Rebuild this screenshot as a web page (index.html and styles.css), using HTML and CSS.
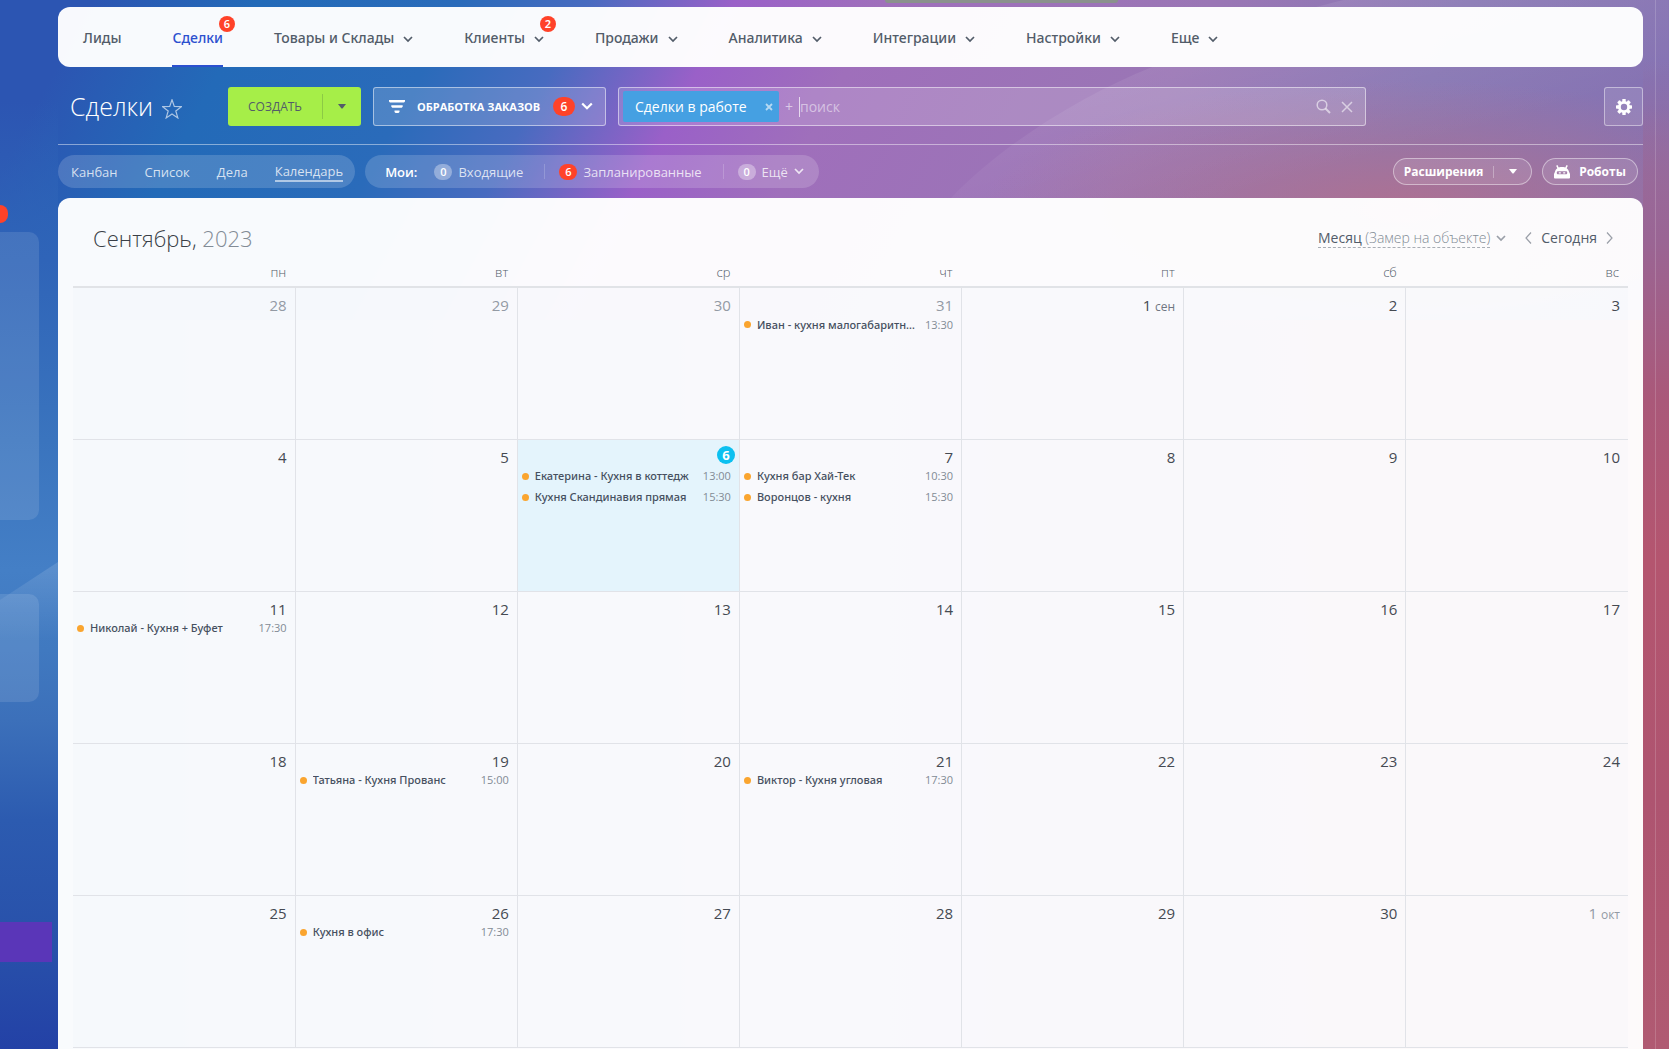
FILE: index.html
```html
<!DOCTYPE html>
<html lang="ru">
<head>
<meta charset="utf-8">
<meta name="viewport" content="width=device-width, initial-scale=1">
<title>Сделки</title>
<link rel="stylesheet" href="styles.css">
</head>
<body>
<svg class="defs" aria-hidden="true">
  <symbol id="chev" viewBox="0 0 10 7"><path d="M1 1l4 4 4-4" fill="none" stroke="currentColor" stroke-width="1.7"/></symbol>
  <symbol id="caret" viewBox="0 0 8 5"><path d="M0 0h8L4.500 4.500h-1z" fill="currentColor"/></symbol>
</svg>
<div class="wave-left" aria-hidden="true"></div>
<svg class="wave-right" aria-hidden="true" viewBox="0 0 713 198" preserveAspectRatio="none"><defs><linearGradient id="wg" x1="0" y1="0" x2="1" y2="1"><stop offset="0" stop-color="#fff" stop-opacity=".13"/><stop offset=".7" stop-color="#fff" stop-opacity="0"/></linearGradient></defs><path d="M0 198C50 145 130 95 200 67C270 35 340 12 390 0H713V198Z" fill="url(#wg)"/></svg>
<div class="layout">
  <aside class="side" aria-label="Боковое меню">
    <span class="side-badge"></span>
    <div class="side-card side-card-tall"></div>
    <div class="side-card side-card-short"></div>
    <div class="side-accent"></div>
  </aside>
  <main class="main">
    <nav class="nav" aria-label="Разделы CRM">
      <a href="#">Лиды</a>
      <a href="#" class="active">Сделки<span class="badge nav-badge">6</span></a>
      <a href="#">Товары и Склады<svg class="chev"><use href="#chev"/></svg></a>
      <a href="#">Клиенты<svg class="chev"><use href="#chev"/></svg><span class="badge nav-badge">2</span></a>
      <a href="#">Продажи<svg class="chev"><use href="#chev"/></svg></a>
      <a href="#">Аналитика<svg class="chev"><use href="#chev"/></svg></a>
      <a href="#">Интеграции<svg class="chev"><use href="#chev"/></svg></a>
      <a href="#">Настройки<svg class="chev"><use href="#chev"/></svg></a>
      <a href="#">Еще<svg class="chev"><use href="#chev"/></svg></a>
    </nav>

    <header class="toolbar">
      <h1>Сделки</h1>
      <button class="star" aria-label="В избранное"><svg viewBox="0 0 20 20"><path d="M10 .8l2.300 6.600 7.100.3-5.600 4.300 2 6.900L10 14.900l-5.800 4 2-6.900L.6 7.700l7.100-.3z" fill="none" stroke="currentColor" stroke-width="1.200"/></svg></button>
      <div class="create">
        <button class="create-main">СОЗДАТЬ</button>
        <button class="create-more" aria-label="Ещё варианты"><svg class="caret"><use href="#caret"/></svg></button>
      </div>
      <button class="funnel">
        <svg class="funnel-icon" viewBox="0 0 16 14"><path d="M0 0h16v1.500l-1 1H1l-1-1zM2.300 5.200h11.400v1.500l-1 1H3.300l-1-1zM5.500 10.500h5v1.500l-1 1h-3l-1-1z" fill="currentColor"/></svg>
        <span class="funnel-name">ОБРАБОТКА ЗАКАЗОВ</span>
        <span class="badge funnel-badge">6</span>
        <svg class="chev-bold" viewBox="0 0 12 9"><path d="M1.200 1.500L6 6.300l4.800-4.800" fill="none" stroke="currentColor" stroke-width="2.200"/></svg>
      </button>
      <div class="search">
        <span class="tag">Сделки в работе<button aria-label="Убрать фильтр"><svg viewBox="0 0 8 8"><path d="M1 1l6 6M7 1L1 7" stroke="currentColor" stroke-width="1.800"/></svg></button></span>
        <span class="plus">+</span>
        <input type="text" placeholder="поиск" aria-label="поиск">
        <button class="search-btn" aria-label="Найти"><svg viewBox="0 0 15 15"><circle cx="6" cy="6" r="4.800" fill="none" stroke="currentColor" stroke-width="1.500"/><path d="M9.500 9.500l4.500 4.500" stroke="currentColor" stroke-width="2"/></svg></button>
        <button class="clear-btn" aria-label="Очистить"><svg viewBox="0 0 12 12"><path d="M1 1l10 10M11 1L1 11" stroke="currentColor" stroke-width="1.500"/></svg></button>
      </div>
      <button class="gear" aria-label="Настройки"><svg viewBox="-8 -8 16 16"><g fill="currentColor"><rect x="-1.700" y="-8" width="3.400" height="16" rx=".6"/><rect x="-1.700" y="-8" width="3.400" height="16" rx=".6" transform="rotate(45)"/><rect x="-1.700" y="-8" width="3.400" height="16" rx=".6" transform="rotate(90)"/><rect x="-1.700" y="-8" width="3.400" height="16" rx=".6" transform="rotate(135)"/><circle r="6"/></g><circle r="3.200" fill="#9684bb"/></svg></button>
    </header>

    <div class="subbar">
      <nav class="pill views" aria-label="Вид">
        <a href="#">Канбан</a><a href="#">Список</a><a href="#">Дела</a><a href="#" class="current">Календарь</a>
      </nav>
      <div class="pill counters">
        <span class="mine">Мои:</span>
        <a href="#"><span class="count">0</span>Входящие</a>
        <a href="#"><span class="count hot">6</span>Запланированные</a>
        <a href="#"><span class="count">0</span>Ещё<svg class="chev"><use href="#chev"/></svg></a>
      </div>
      <div class="outline ext">
        <button class="ext-main">Расширения</button>
        <button class="ext-more" aria-label="Список расширений"><svg class="caret"><use href="#caret"/></svg></button>
      </div>
      <button class="outline robots"><svg viewBox="0 0 16 14"><path d="M2.800.4L4.300 3.400M13.200.4L11.700 3.400" stroke="currentColor" stroke-width="1.500"/><path fill-rule="evenodd" d="M1 6.800C1.600 3.800 4.300 2 8 2s6.400 1.800 7 4.800L16 9v3.200c0 1-.5 1.300-1.300 1.300H1.300C.5 13.500 0 13.200 0 12.200V9zM3.500 6.300c-1 .5-1 2.500 0 3h9c1-.5 1-2.500 0-3z" fill="currentColor"/><path d="M4.800 7.800h2M9.200 7.800h2" stroke="currentColor" stroke-width="1.300"/></svg>Роботы</button>
    </div>

    <section class="panel">
      <div class="cal-head">
        <h2>Сентябрь, <span>2023</span></h2>
        <button class="mode"><span class="mode-text">Месяц <span>(Замер на объекте)</span></span><svg class="chev"><use href="#chev"/></svg></button>
        <div class="pager">
          <button aria-label="Назад"><svg viewBox="0 0 7 12"><path d="M6 .5L1 6l5 5.500" fill="none" stroke="currentColor" stroke-width="1.200"/></svg></button>
          <button class="today-btn">Сегодня</button>
          <button aria-label="Вперёд"><svg viewBox="0 0 7 12"><path d="M1 .5L6 6l-5 5.500" fill="none" stroke="currentColor" stroke-width="1.200"/></svg></button>
        </div>
      </div>
      <table class="cal">
        <thead><tr><th>пн</th><th>вт</th><th>ср</th><th>чт</th><th>пт</th><th>сб</th><th>вс</th></tr></thead>
        <tbody>
          <tr>
            <td class="other"><b>28</b></td><td class="other"><b>29</b></td><td class="other"><b>30</b></td>
            <td class="other"><b>31</b><a href="#" class="ev"><span>Иван - кухня малогабаритная</span><time>13:30</time></a></td>
            <td><b>1 <small>сен</small></b></td><td><b>2</b></td><td><b>3</b></td>
          </tr>
          <tr>
            <td><b>4</b></td><td><b>5</b></td>
            <td class="today"><b>6</b><a href="#" class="ev"><span>Екатерина - Кухня в коттедж</span><time>13:00</time></a><a href="#" class="ev"><span>Кухня Скандинавия прямая</span><time>15:30</time></a></td>
            <td><b>7</b><a href="#" class="ev"><span>Кухня бар Хай-Тек</span><time>10:30</time></a><a href="#" class="ev"><span>Воронцов - кухня</span><time>15:30</time></a></td>
            <td><b>8</b></td><td><b>9</b></td><td><b>10</b></td>
          </tr>
          <tr>
            <td><b>11</b><a href="#" class="ev"><span>Николай - Кухня + Буфет</span><time>17:30</time></a></td>
            <td><b>12</b></td><td><b>13</b></td><td><b>14</b></td><td><b>15</b></td><td><b>16</b></td><td><b>17</b></td>
          </tr>
          <tr>
            <td><b>18</b></td>
            <td><b>19</b><a href="#" class="ev"><span>Татьяна - Кухня Прованс</span><time>15:00</time></a></td>
            <td><b>20</b></td>
            <td><b>21</b><a href="#" class="ev"><span>Виктор - Кухня угловая</span><time>17:30</time></a></td>
            <td><b>22</b></td><td><b>23</b></td><td><b>24</b></td>
          </tr>
          <tr>
            <td><b>25</b></td>
            <td><b>26</b><a href="#" class="ev"><span>Кухня в офис</span><time>17:30</time></a></td>
            <td><b>27</b></td><td><b>28</b></td><td><b>29</b></td><td><b>30</b></td>
            <td class="other"><b>1 <small>окт</small></b></td>
          </tr>
        </tbody>
      </table>
    </section>
  </main>
  <div class="rail" aria-hidden="true"></div>
</div>
<div class="notch" aria-hidden="true"></div>
</body>
</html>
```
FILE: styles.css
```css
* { box-sizing: border-box; }
body {
  margin: 0;
  height: 100vh;
  overflow: hidden;
  position: relative;
  font: 14px/20px "Open Sans", "Noto Sans", sans-serif;
  color: #525c69;
  background:
    linear-gradient(to bottom, #2d5cb500 100px, #2f64b8 260px, #3a74be 440px, #447fc6 570px, #4079c0 650px, #3c70ba 720px, #2c5bb0 820px, #2850aa 950px, #2341a6 1049px) left top / 58px 100% no-repeat,
    linear-gradient(to bottom, #8570b200 60px, #9a6594 240px, #aa5879 400px, #b4556f 560px, #ae5470 800px, #b05a72 1049px) right top / 26px 100% no-repeat,
    radial-gradient(ellipse 420px 130px at 84% 210px, #b4708cdd, #b4708c00),
    linear-gradient(118deg, #2c55b2 0, #2c55b2 5%, #236ab8 14%, #2a6bba 25%, #486bc0 32%, #9a60c8 40%, #9f6fbb 48%, #9a76b5 66%, #8978b4 80%, #8470b2 100%) left top / 100% 320px no-repeat,
    linear-gradient(90deg, #4079c0, #a074b8 50%, #b4556f);
}
a { color: inherit; text-decoration: none; }
button { font: inherit; color: inherit; background: none; border: 0; padding: 0; margin: 0; display: flex; align-items: center; justify-content: center; }
svg { display: block; flex: none; }
.defs { position: absolute; width: 0; height: 0; }
.chev { width: 10px; height: 7px; }
.caret { width: 8px; height: 5px; }

.wave-left {
  position: absolute; left: 0; top: 562px; width: 58px; height: 80px;
  clip-path: polygon(0 38px, 100% 0, 100% 100%, 0 100%);
  background: linear-gradient(to bottom, #ffffff22, #ffffff00);
}
.wave-right { position: absolute; right: 0; top: 0; width: 43%; height: 198px; }
.notch { position: absolute; left: 53%; top: 0; width: 14%; height: 3px; border-radius: 0 0 6px 6px; background: #8a918d; }

.layout { position: relative; display: flex; min-height: 100%; }
.side { width: 58px; flex: none; padding-top: 205px; }
.side-badge { display: block; width: 8px; height: 18px; border-radius: 0 9px 9px 0; background: #ff4229; }
.side-card { width: 39px; border-radius: 0 10px 10px 0; background: #ffffff1c; }
.side-card-tall { height: 288px; margin-top: 9px; }
.side-card-short { height: 108px; margin-top: 74px; }
.side-accent { width: 52px; height: 40px; margin-top: 220px; background: #5a36b8; }
.main { flex: 1; min-width: 0; display: flex; flex-direction: column; padding-top: 7px; }
.rail { width: 26px; flex: none; background: linear-gradient(#ffffff2a, #ffffff2a) 12px 0 / 1px 100% no-repeat; }

.badge { display: flex; align-items: center; justify-content: center; background: #ff4229; color: #fff; border-radius: 12px; font-weight: 600; }
.nav { display: flex; gap: 51px; height: 60px; padding: 0 25px; border-radius: 12px; background: #fffffff7; font-family: "Noto Sans", sans-serif; font-weight: 500; }
.nav a { position: relative; display: flex; align-items: center; gap: 9px; white-space: nowrap; padding-top: 1px; }
.nav a .chev { margin-top: 3px; }
.nav .active { color: #2c50cf; box-shadow: inset 0 -2px #2c50cf; }
.nav-badge { position: absolute; right: -12px; top: 9px; width: 16px; height: 16px; font-size: 11px; }

.toolbar { display: flex; align-items: center; padding: 20px 0 18px 12px; border-bottom: 1px solid #ffffff73; color: #fff; }
h1 { margin: 0 0 2px; width: 82px; font-size: 25px; line-height: 32px; font-weight: 300; }
.star { margin-left: 10px; color: #ffffffa0; }
.star svg { width: 20px; height: 20px; margin-top: 4px; }
.create { display: flex; width: 133px; height: 39px; margin-left: 46px; border-radius: 3px; background: #a6ee48; color: #535c69; font-size: 12px; }
.create-main { flex: 1; }
.create-more { width: 39px; border-left: 1px solid #8cca45; margin: 7px 0; }
.funnel { width: 233px; height: 39px; margin-left: 12px; padding: 0 12px 0 15px; justify-content: flex-start; border: 1px solid #ffffff80; border-radius: 3px; background: #ffffff2a; font-size: 11px; font-weight: 700; }
.funnel-icon { width: 16px; height: 14px; }
.funnel-name { flex: 1; margin-left: 12px; text-align: left; white-space: nowrap; }
.funnel-badge { width: 22px; height: 19px; font-size: 12px; }
.chev-bold { width: 12px; height: 9px; margin-left: 6px; }
.search { flex: 1; max-width: 748px; min-width: 0; height: 39px; margin: 0 12px; padding: 0 12px 0 4px; display: flex; align-items: center; border: 1px solid #ffffff80; border-radius: 3px; background: #ffffff2a; }
.tag { display: flex; align-items: center; justify-content: space-between; width: 156px; height: 31px; padding: 0 6px 0 12px; border-radius: 2px; background: #45a0e2; white-space: nowrap; }
.tag svg { width: 8px; height: 8px; color: #ffffff99; }
.plus { width: 20px; padding-left: 6px; color: #ffffff90; }
.search input { flex: 1; min-width: 0; height: 20px; padding: 0; border: 0; border-left: 1px solid #ffffffb0; outline: 0; background: none; color: #fff; font: inherit; }
.search input::placeholder { color: #ffffff80; opacity: 1; }
.search-btn, .clear-btn { color: #ffffff90; }
.search-btn svg { width: 15px; height: 15px; }
.clear-btn { margin-left: 10px; }
.clear-btn svg { width: 12px; height: 12px; }
.gear { width: 39px; height: 39px; margin-left: auto; border: 1px solid #ffffff70; border-radius: 3px; background: #ffffff1c; color: #fff; }
.gear svg { width: 16px; height: 16px; }

.subbar { display: flex; align-items: center; padding: 10px 5px 10px 0; color: #ffffffc8; font-size: 13px; }
.pill { display: flex; align-items: center; height: 33px; border-radius: 17px; background: #ffffff2a; white-space: nowrap; }
.views { padding: 0 12px 0 13px; gap: 27px; }
.views .current { border-bottom: 2px solid #ffffff90; line-height: 18px; }
.counters { margin-left: 10px; padding: 0 15px 0 20px; }
.mine { margin-right: 17px; color: #fff; font-weight: 600; }
.counters a { display: flex; align-items: center; gap: 6px; }
.counters a + a::before { content: ""; width: 1px; height: 15px; margin: 0 8px 0 21px; background: #ffffff2e; }
.count { width: 18px; height: 16px; border-radius: 8px; background: #ffffff58; color: #fff; font-size: 11px; line-height: 16px; font-weight: 600; text-align: center; }
.hot { background: #ff4229; }
.outline { display: flex; align-items: center; height: 27px; border: 1px solid #ffffff70; border-radius: 14px; background: #ffffff1c; color: #fff; font-size: 12px; font-weight: 700; }
.ext { width: 139px; margin-left: auto; }
.ext-main { flex: 1; }
.ext-more { width: 38px; height: 12px; border-left: 1px solid #ffffff50; }
.robots { width: 96px; margin-left: 10px; gap: 9px; }
.robots svg { width: 16px; height: 14px; }

.panel { flex: 1; padding: 21px 15px 0; border-radius: 12px 12px 0 0; background: #fffffff7; }
.cal-head { display: flex; align-items: center; padding: 0 15px 0 20px; }
h2 { margin: 0 auto 0 0; font-size: 22px; line-height: 38px; font-weight: 300; color: #3a3f47; white-space: nowrap; }
h2 span { color: #828b95; }
.mode { gap: 6px; }
.mode-text { border-bottom: 1px dashed #a8adb4; white-space: nowrap; line-height: 18px; }
.mode-text span { color: #828b95; font-weight: 300; }
.mode .chev, .pager svg { color: #9a9fa8; }
.pager { display: flex; align-items: center; gap: 9px; margin-left: 19px; }
.pager svg { width: 7px; height: 12px; }
.cal { width: 100%; table-layout: fixed; border-collapse: collapse; }
th { height: 30px; padding: 0 9px 4px 0; text-align: right; vertical-align: bottom; font-size: 13px; line-height: 20px; font-weight: 300; border-bottom: 2px solid #e1e3e7; }
td { height: 152px; padding: 8px 8px 0 4px; vertical-align: top; border: 1px solid #e1e3e8; border-top: 0; background: #5a64b404; }
td:first-child { border-left: 0; }
td:last-child { border-right: 0; }
td b { display: block; height: 18px; line-height: 18px; font-size: 15px; font-weight: 400; color: #454a52; text-align: right; }
td small { font-size: 12px; color: #6f7782; }
.other b, .other small { color: #939aa4; }
.today { background: #e4f4fc; }
.today b { display: flex; align-items: center; justify-content: center; width: 18px; height: 18px; margin: -2px -4px 2px auto; border-radius: 9px; background: #0bc0f0; color: #fff; font-size: 13px; font-weight: 700; }
.ev { display: flex; align-items: center; height: 21px; font-size: 11px; }
.ev::before { content: ""; width: 7px; height: 7px; flex: none; margin-right: 6px; border-radius: 50%; background: #faa52f; }
.ev span { flex: 1; min-width: 0; overflow: hidden; white-space: nowrap; text-overflow: ellipsis; font-family: "Noto Sans", sans-serif; font-weight: 500; color: #465060; }
.ev time { margin-left: 8px; color: #828b95; }
```
